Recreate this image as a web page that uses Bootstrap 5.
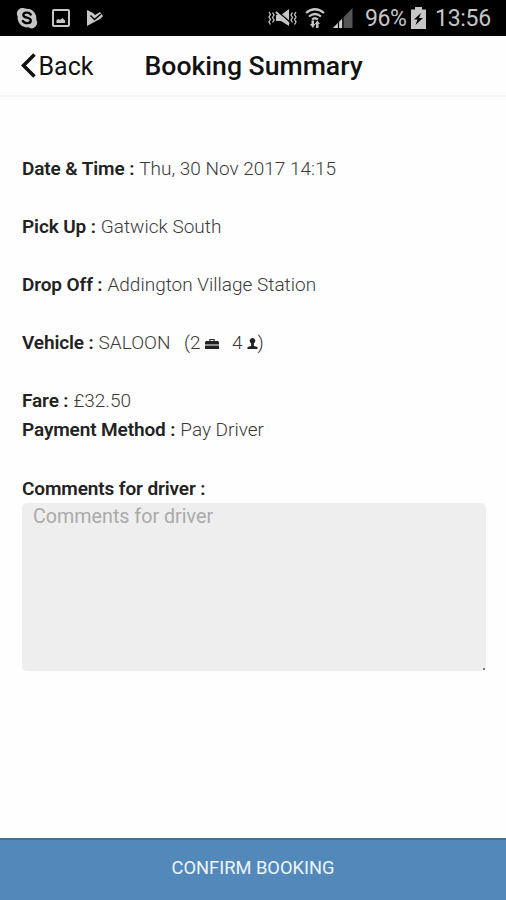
<!DOCTYPE html>
<html lang="en">
<head>
<meta charset="utf-8">
<meta name="viewport" content="width=device-width, initial-scale=1">
<title>Booking Summary</title>
<link href="https://cdn.jsdelivr.net/npm/bootstrap@5.3.0/dist/css/bootstrap.min.css" rel="stylesheet">
<style>
  body { font-family: Roboto, "Liberation Sans", sans-serif; color: #222; background: #fefefe; }
  .status-bar { height: 36px; background: #000; color: #c6c6c6; font-size: 23px; line-height: 36px; padding: 0 15px 0 16px; }
  .status-bar svg { display: block; flex-shrink: 0; }
  .photo { margin-left: 14px; }
  .wifi { margin-left: 8px; }
  .signal { margin-left: 8px; margin-top: -1px; }
  .battery-text { margin: 2px 0 0 12px; width: 46px; letter-spacing: -.4px; }
  .battery { margin-top: -1px; }
  .status-time { width: 56px; margin: 2px 0 0 9px; letter-spacing: -.3px; }
  .title-bar { height: 61px; border-bottom: 2px solid #f7f7f7; color: #111; padding-left: 21px; }
  .back-link { font-size: 25px; line-height: 60px; color: #111; width: 123.5px; }
  .back-text { margin: 3px 0 0 1.500px; }
  .page-title { font-size: 26.6px; line-height: 60px; }
  .summary { padding: 56.500px 20px 0 22px; font-size: 19px; line-height: 29.1px; }
  .summary dt { font-weight: 600; color: #222; letter-spacing: -.12px; }
  .summary dd { font-weight: 300; color: #3a3a3a; padding-left: 1px; }
  .spaced { margin-bottom: 29.1px; }
  .luggage { margin-left: 13.500px; }
  .icon-gap { margin-left: 4px; margin-top: 2px; }
  .seats { margin-left: 13.500px; }
  .comment-box { height: 168px; background: #eee; border-radius: 5px; font-size: 19.7px; line-height: 24px; padding: 2px 11px; resize: none; }
  .comment-box::placeholder { color: #aaa; opacity: 1; }
  .comment-box:focus { background: #eee; }
  .grip { right: 1px; bottom: 1px; width: 2px; height: 2px; background: #777; }
  .confirm { height: 62px; background: #5288ba; color: #edf6fc; border-top: 2px solid #41719b; font-size: 18.3px; line-height: 56px; }
  .confirm-text { display: block; margin-top: -4px; }
</style>
</head>
<body>
<div class="d-flex flex-column vh-100 overflow-hidden">
  <div class="status-bar d-flex align-items-center flex-shrink-0">
    <svg width="22" height="22" viewBox="0 0 22 22"><path fill="#c6c6c6" d="M6 1a6 6 0 0 1 4 .7 9.500 9.500 0 0 1 10.200 11A5.600 5.600 0 0 1 12.300 20.300 9.500 9.500 0 0 1 1.700 9.500 5.600 5.600 0 0 1 6 1Z"/><path fill="none" stroke="#000" stroke-width="2.300" stroke-linecap="round" d="M14.700 7.500C13 4.900 7.400 5.100 7.300 8c-.1 3.500 7.600 1.900 7.500 5.600-.1 3.200-6.300 3.400-8 .3"/></svg>
    <svg class="photo" width="18" height="19" viewBox="0 0 18 19"><rect x="1" y="1" width="16" height="16" rx="1" fill="none" stroke="#c6c6c6" stroke-width="2"/><path fill="#c6c6c6" d="M4.500 14v-3l2-1 1.500 1 2.500-2 2.500 2.500V14Z"/></svg>
    <svg class="ms-3" width="17" height="18" viewBox="0 0 17 18"><path fill="#c6c6c6" d="M1 1 7 4 9 6 14 3 17 7 14 10 1 17Z"/><path fill="none" stroke="#000" stroke-width="1.500" d="m4.500 6.500 4 4L15 5"/></svg>
    <svg class="ms-auto" width="29" height="20" viewBox="0 0 29 20"><g fill="none" stroke="#c6c6c6" stroke-width="1.300"><path d="m1 4 1.500 2.500L1 9l1.500 2.500L1 14l1.500 2.500M4.500 4.500 6 7 4.500 9.500 6 12l-1.500 2.500M24.500 4.500 23 7l1.500 2.500L23 12l1.500 2.500M28 4l-1.500 2.500L28 9l-1.500 2.500L28 14l-1.500 2.500"/></g><path fill="#c6c6c6" d="M8 7h5l8-6v17l-8-5H8Z"/><path stroke="#000" stroke-width="1.500" d="m9 3 13 11"/><path stroke="#c6c6c6" stroke-width="2" d="m8 4 13 12"/></svg>
    <svg class="wifi" width="20" height="20" viewBox="0 0 20 20"><g fill="none" stroke="#c6c6c6" stroke-width="2.200"><path d="M1 5q9-7.500 18 0M4 8.500q6-5 12 0M7 11.500q3-2.500 6 0"/></g><path fill="#c6c6c6" d="M6.500 12.500h2.500V16h1.500L7.800 20 5 16h1.500ZM12.300 12.500 15 16h-1.500v4H11v-4H9.700Z"/></svg>
    <svg class="signal" width="20" height="20" viewBox="0 0 20 20"><path fill="#555" d="M0 20 19.500 0v20Z"/><path fill="#d2d2d2" d="M0 20 9 11v9Z"/><path stroke="#000" stroke-width="1.200" d="M5.500 11v9M10 5v15"/></svg>
    <span class="battery-text">96%</span>
    <svg class="battery" width="15" height="22" viewBox="0 0 15 22"><path fill="#c6c6c6" d="M4 0h7v2.500h4V22H0V2.500h4Z"/><path fill="#000" d="M10 6 3 12.500h3.500L4.500 18l7.500-7H8Z"/></svg>
    <span class="status-time">13:56</span>
  </div>

  <header class="title-bar d-flex flex-shrink-0">
    <a href="#" class="back-link d-flex align-items-center text-decoration-none"><svg width="16" height="26" viewBox="0 0 16 26"><path fill="none" stroke="#111" stroke-width="3.500" d="M13.500 1.500 2.500 12.500l11 11"/></svg><span class="back-text">Back</span></a>
    <h1 class="page-title fw-medium m-0">Booking Summary</h1>
  </header>

  <main class="summary flex-grow-1">
    <dl class="m-0">
      <div class="d-flex gap-1 spaced"><dt>Date &amp; Time :</dt><dd class="mb-0 ms-0">Thu, 30 Nov 2017 14:15</dd></div>
      <div class="d-flex gap-1 spaced"><dt>Pick Up :</dt><dd class="mb-0 ms-0">Gatwick South</dd></div>
      <div class="d-flex gap-1 spaced"><dt>Drop Off :</dt><dd class="mb-0 ms-0">Addington Village Station</dd></div>
      <div class="d-flex gap-1 spaced"><dt>Vehicle :</dt><dd class="mb-0 ms-0 d-flex align-items-center"><span>SALOON</span><span class="luggage">(2</span><svg class="icon-gap" width="14" height="10" viewBox="0 0 13 10" preserveAspectRatio="none"><path fill="#222" d="M4 2V0h5v2h3l1 1v2.500H0V3l1-1ZM5 1v1h3V1ZM0 6.500h13V10H0Z"/></svg><span class="seats">4</span><svg class="icon-gap" width="11" height="11" viewBox="0 0 11 11"><path fill="#222" d="M5.500 0a2.800 2.800 0 0 1 1.400 5.200V8L10.500 9v2H.5V9l3.600-1V5.200A2.800 2.800 0 0 1 5.500 0Z"/></svg><span>)</span></dd></div>
      <div class="d-flex gap-1"><dt>Fare :</dt><dd class="mb-0 ms-0">£32.50</dd></div>
      <div class="d-flex gap-1 spaced"><dt>Payment Method :</dt><dd class="mb-0 ms-0">Pay Driver</dd></div>
      <dt><label for="comments">Comments for driver :</label></dt>
    </dl>
    <div class="position-relative">
      <textarea id="comments" class="comment-box form-control border-0" placeholder="Comments for driver"></textarea>
      <span class="grip position-absolute"></span>
    </div>
  </main>

  <button class="confirm btn rounded-0 border-start-0 border-end-0 border-bottom-0 w-100 flex-shrink-0 py-0"><span class="confirm-text">CONFIRM BOOKING</span></button>
</div>
<script src="https://cdn.jsdelivr.net/npm/bootstrap@5.3.0/dist/js/bootstrap.bundle.min.js"></script>
</body>
</html>
